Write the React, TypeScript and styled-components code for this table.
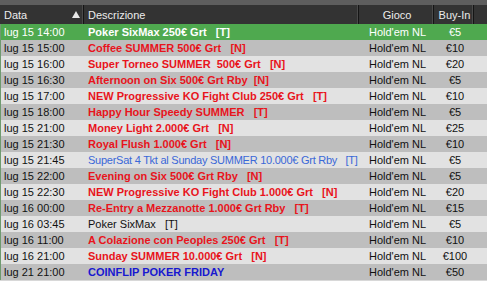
import { createGlobalStyle } from 'styled-components';
import styled from 'styled-components';

type Tone = 'red' | 'black' | 'blue' | 'navy' | 'white';

interface Row {
  date: string;
  desc: string;
  tone: Tone;
  buyIn: string;
}

const rows: Row[] = [
  { date: 'lug 15 14:00', desc: 'Poker SixMax 250€ Grt   [T]', tone: 'white', buyIn: '€5' },
  { date: 'lug 15 15:00', desc: 'Coffee SUMMER 500€ Grt   [N]', tone: 'red', buyIn: '€10' },
  { date: 'lug 15 16:00', desc: 'Super Torneo SUMMER  500€ Grt   [N]', tone: 'red', buyIn: '€20' },
  { date: 'lug 15 16:30', desc: 'Afternoon on Six 500€ Grt Rby  [N]', tone: 'red', buyIn: '€5' },
  { date: 'lug 15 17:00', desc: 'NEW Progressive KO Fight Club 250€ Grt   [T]', tone: 'red', buyIn: '€10' },
  { date: 'lug 15 18:00', desc: 'Happy Hour Speedy SUMMER   [T]', tone: 'red', buyIn: '€5' },
  { date: 'lug 15 21:00', desc: 'Money Light 2.000€ Grt   [N]', tone: 'red', buyIn: '€25' },
  { date: 'lug 15 21:30', desc: 'Royal Flush 1.000€ Grt   [N]', tone: 'red', buyIn: '€10' },
  { date: 'lug 15 21:45', desc: 'SuperSat 4 Tkt al Sunday SUMMER 10.000€ Grt Rby   [T]', tone: 'blue', buyIn: '€5' },
  { date: 'lug 15 22:00', desc: 'Evening on Six 500€ Grt Rby   [N]', tone: 'red', buyIn: '€5' },
  { date: 'lug 15 22:30', desc: 'NEW Progressive KO Fight Club 1.000€ Grt   [N]', tone: 'red', buyIn: '€20' },
  { date: 'lug 16 00:00', desc: 'Re-Entry a Mezzanotte 1.000€ Grt Rby   [T]', tone: 'red', buyIn: '€15' },
  { date: 'lug 16 03:45', desc: 'Poker SixMax   [T]', tone: 'black', buyIn: '€5' },
  { date: 'lug 16 11:00', desc: 'A Colazione con Peoples 250€ Grt   [T]', tone: 'red', buyIn: '€10' },
  { date: 'lug 16 21:00', desc: 'Sunday SUMMER 10.000€ Grt   [N]', tone: 'red', buyIn: '€100' },
  { date: 'lug 21 21:00', desc: 'COINFLIP POKER FRIDAY', tone: 'navy', buyIn: '€50' },
];

const toneColor: Record<Tone, string> = {
  red: '#e8141c',
  black: '#111111',
  blue: '#3a68d8',
  navy: '#1818d0',
  white: '#ffffff',
};

const GlobalStyle = createGlobalStyle`
  html, body {
    margin: 0;
    padding: 0;
    background: #d6d6d6;
  }
  body {
    font-family: 'Liberation Sans', Arial, sans-serif;
    font-size: 11px;
  }
`;

const Table = styled.div`
  width: 487px;
  height: 281px;
  overflow: hidden;
  background: #d8d8d8;
`;

const TopStrip = styled.div`
  height: 5px;
  background: #5e5e5e;
`;

const cols = '84px 275px 75px 40px 1fr';

const Header = styled.div`
  display: grid;
  grid-template-columns: ${cols};
  height: 19px;
  background: #333333;
  color: #ececec;
  white-space: nowrap;
`;

const HeadCell = styled.div<{ $center?: boolean }>`
  display: flex;
  align-items: center;
  justify-content: ${({ $center }) => ($center ? 'center' : 'space-between')};
  padding: 0 2px 0 4px;
  border-right: 1px solid #151515;
  box-shadow: inset -1px 0 0 #4a4a4a;
  font-size: 11px;
  &:last-child {
    border-right: none;
    box-shadow: none;
  }
`;

const SortArrow = styled.span`
  width: 0;
  height: 0;
  border-left: 4px solid transparent;
  border-right: 4px solid transparent;
  border-bottom: 7px solid #e8e8e8;
  margin-right: 1px;
`;

const Body = styled.div`
  border-left: 1px solid #6f9a6f;
`;

const RowLine = styled.div<{ $bg: string }>`
  display: grid;
  grid-template-columns: ${cols};
  height: 16px;
  align-items: center;
  background: ${({ $bg }) => $bg};
  white-space: pre;
`;

const DateCell = styled.div<{ $selected?: boolean }>`
  padding-left: 3px;
  color: ${({ $selected }) => ($selected ? '#ffffff' : '#111111')};
`;

const DescCell = styled.div<{ $tone: Tone }>`
  padding-left: 3px;
  color: ${({ $tone }) => toneColor[$tone]};
  font-weight: ${({ $tone }) => ($tone === 'black' || $tone === 'blue' ? 400 : 700)};
  letter-spacing: ${({ $tone }) => ($tone === 'blue' ? '-0.25px' : '0')};
  overflow: hidden;
`;

const CenterCell = styled.div<{ $selected?: boolean }>`
  text-align: center;
  color: ${({ $selected }) => ($selected ? '#ffffff' : '#111111')};
`;

export default function App() {
  return (
    <>
      <GlobalStyle />
      <Table>
        <TopStrip />
        <Header>
          <HeadCell>
            <span>Data</span>
            <SortArrow />
          </HeadCell>
          <HeadCell>Descrizione</HeadCell>
          <HeadCell $center>Gioco</HeadCell>
          <HeadCell $center>Buy-In</HeadCell>
          <HeadCell />
        </Header>
        <Body>
          {rows.map((r, i) => {
            const selected = i === 0;
            const bg = selected ? '#4fa94f' : i % 2 === 1 ? '#bebebe' : '#e2e2e2';
            return (
              <RowLine key={r.date + r.desc} $bg={bg}>
                <DateCell $selected={selected}>{r.date}</DateCell>
                <DescCell $tone={r.tone}>{r.desc}</DescCell>
                <CenterCell $selected={selected}>Hold'em NL</CenterCell>
                <CenterCell $selected={selected}>{r.buyIn}</CenterCell>
                <div />
              </RowLine>
            );
          })}
        </Body>
      </Table>
    </>
  );
}
